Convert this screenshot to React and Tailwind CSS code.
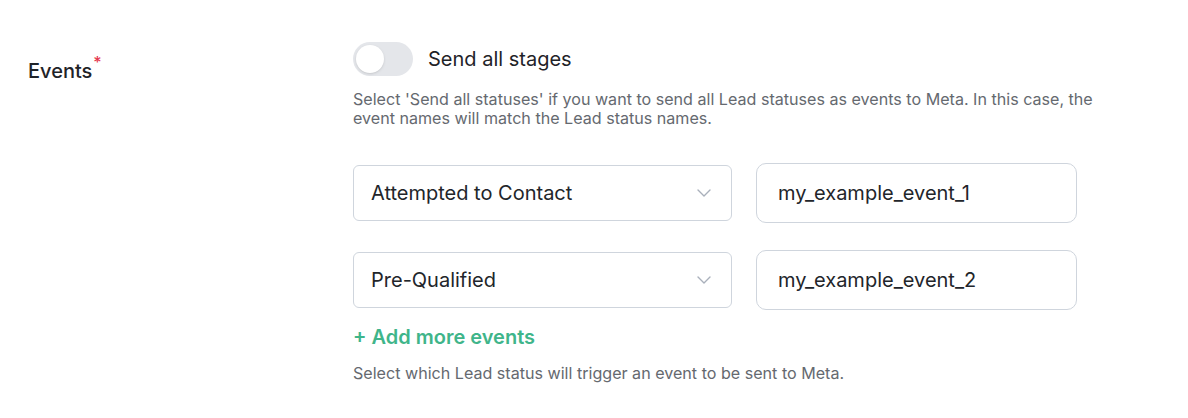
import React from "react";

function Chevron() {
  return (
    <svg width="14" height="8" viewBox="0 0 14 8" fill="none" className="shrink-0">
      <path d="M1 1l6 6 6-6" stroke="#a9b0bb" strokeWidth="1.4" strokeLinecap="round" strokeLinejoin="round" />
    </svg>
  );
}

function Row({ status, event }) {
  return (
    <div className="flex items-center gap-[24px]">
      <div className="flex h-[56px] w-[379px] items-center justify-between rounded-[6px] border border-[#cfd5dd] bg-white pl-[17px] pr-[20px]">
        <span className="text-[20px] text-[#22252a]">{status}</span>
        <Chevron />
      </div>
      <div className="flex h-[60px] w-[321px] items-center rounded-[10px] border border-[#cfd5dd] bg-white pl-[21px]">
        <span className="text-[20px] text-[#22252a]">{event}</span>
      </div>
    </div>
  );
}

export default function App() {
  return (
    <div
      className="h-[418px] w-[1188px] overflow-hidden bg-white"
      style={{ fontFamily: "Inter, 'Noto Sans', sans-serif" }}
    >
      <div className="flex">
        <div className="w-[353px] shrink-0 pl-[28px] pt-[57px]">
          <span className="text-[20px] font-medium leading-[28px] text-[#1f2328]">
            Events
            <span className="relative -top-[10px] ml-[1px] text-[16px] text-[#e5384f]">*</span>
          </span>
        </div>
        <div className="flex flex-col pt-[42px]">
          <div className="flex items-center gap-[15px]">
            <div className="flex h-[34px] w-[60px] items-center rounded-full bg-[#e4e6ea] px-[3px]">
              <div className="h-[28px] w-[28px] rounded-full bg-white shadow-sm" />
            </div>
            <span className="text-[20px] leading-[28px] text-[#1f2328]">Send all stages</span>
          </div>
          <p className="mt-[14px] w-[760px] text-[16.1px] leading-[19px] text-[#65696f]">
            Select 'Send all statuses' if you want to send all Lead statuses as events to Meta. In this case, the
            event names will match the Lead status names.
          </p>
          <div className="mt-[35px] flex flex-col gap-[27px]">
            <Row status="Attempted to Contact" event="my_example_event_1" />
            <Row status="Pre-Qualified" event="my_example_event_2" />
          </div>
          <div className="mt-[13px] text-[20px] font-semibold leading-[28px] text-[#3fb58a]">+ Add more events</div>
          <p className="mt-[12px] text-[16.1px] leading-[20px] text-[#65696f]">
            Select which Lead status will trigger an event to be sent to Meta.
          </p>
        </div>
      </div>
    </div>
  );
}
